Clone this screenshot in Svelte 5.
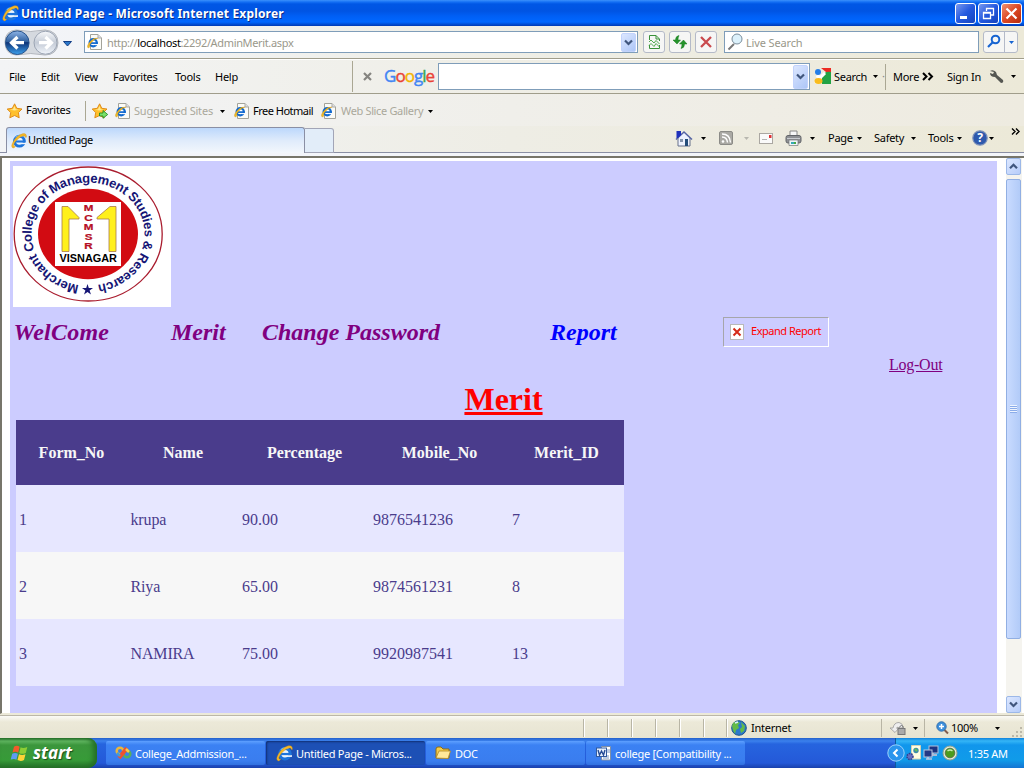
<script>
  const menus = ['File', 'Edit', 'View', 'Favorites', 'Tools', 'Help'];
  const rows = [
    ['1', 'krupa', '90.00', '9876541236', '7'],
    ['2', 'Riya', '65.00', '9874561231', '8'],
    ['3', 'NAMIRA', '75.00', '9920987541', '13']
  ];
  const columns = ['Form_No', 'Name', 'Percentage', 'Mobile_No', 'Merit_ID'];
</script>

{#snippet ie(s)}
  <svg width={s} height={s} viewBox="0 0 16 16">
    <circle cx="8.4" cy="8.2" r="4.9" fill="#eaf5ff" stroke="#1d74dc" stroke-width="2.9" />
    <path d="M10.2 9.6H15V11.2H10.2Z" fill="#f4f6fa" />
    <path d="M4.6 8.5H14.3" stroke="#1d74dc" stroke-width="2.1" />
    <path d="M4.6 4.4Q8 1.5 11.6 3.4" stroke="#6bbcff" stroke-width="1.2" fill="none" />
    <path d="M2.2 15Q-.8 14.1 2.2 8.7Q5.8 2.4 11.4.8Q15.8-.2 15.4 4.2L14.4 4.3Q14.2 1.7 9.6 4Q4.4 7.2 2.8 11.3Q2.1 13.8 4.6 13.3Q3.4 15 2.2 15Z" fill="#f5b928" stroke="#c88412" stroke-width=".35" />
  </svg>
{/snippet}

{#snippet page()}
  <svg width="16" height="16" viewBox="0 0 16 16">
    <path d="M3.5.5H11L14.5 4V15.5H3.5Z" fill="#fbfbf7" stroke="#a3a39a" />
    <path d="M11 .5V4H14.5" fill="#ddd" stroke="#aaa" />
    <circle cx="6.2" cy="8.8" r="3.6" fill="#fff" stroke="#1169cf" stroke-width="2.2" />
    <path d="M3 9.1H10.8" stroke="#1169cf" stroke-width="1.7" />
    <path d="M7.6 10.6H11" stroke="#fff" stroke-width="1.1" />
    <path d="M1.4 14Q-.8 12.6 2.6 8.2Q6.8 3.2 11 4.1Q7.4 4.8 4 8.8Q1.7 12.1 3 12.7Z" fill="#f4bd23" stroke="#c48a10" stroke-width=".4" />
  </svg>
{/snippet}

{#snippet arrow(color)}
  <svg class="arrow" width="5" height="3" viewBox="0 0 5 3"><path d="M0 0H5L2.5 3Z" fill={color} /></svg>
{/snippet}

{#snippet chevron(up)}
  <svg width="9" height="7" viewBox="0 0 9 7"><path d={up ? 'M1 5.3L4.5 1.8L8 5.3' : 'M1 1.5L4.5 5L8 1.5'} fill="none" stroke="#40567d" stroke-width="2.2" /></svg>
{/snippet}

{#snippet star(plus)}
  <svg width="16" height="16" viewBox="0 0 16 16">
    <path d="M7.6.8L9.8 5.3L15 6L11.4 9.6L12.2 14.8L7.6 12.5L2.8 14.8L3.7 9.6L.2 6L5.3 5.3Z" fill="#ffc02c" stroke="#dd8411" stroke-width=".9" />
    <path d="M7.4 3L8.7 6.3L11.4 6.8L7.6 7.6L3 6.8L6 6.2Z" fill="#ffe995" />
    {#if plus}<path d="M7.5 10H11V7.5L15.7 11.5L11 15.3V13H7.5Z" fill="#79df69" stroke="#16841b" stroke-width=".8" />{/if}
  </svg>
{/snippet}

<div class="screen">
  <header class="titlebar">
    <span class="app-icon">{@render ie(17)}</span>
    <h1>Untitled Page - Microsoft Internet Explorer</h1>
    <div class="window-buttons">
      <button aria-label="Minimize"><svg width="19" height="19"><path d="M4 13.5H11" stroke="#fff" stroke-width="3" /></svg></button>
      <button aria-label="Restore"><svg width="19" height="19"><path d="M7.5 7V4.5H14.5V11H12M7 4.5H15M4.5 8.5H11.5V14.5H4.5ZM4 9H12" fill="none" stroke="#fff" stroke-width="1.3" /></svg></button>
      <button class="close" aria-label="Close"><svg width="19" height="19"><path d="M4.5 4.5L14.5 14.5M14.5 4.5L4.5 14.5" stroke="#fff" stroke-width="2.2" /></svg></button>
    </div>
  </header>

  <div class="addressbar">
    <svg width="80" height="31" viewBox="0 0 80 31">
      <defs>
        <linearGradient id="back" x2="0" y2="1"><stop stop-color="#8eb4e7" /><stop offset=".45" stop-color="#31619f" /><stop offset=".5" stop-color="#0d3378" /><stop offset="1" stop-color="#3da1ed" /></linearGradient>
        <linearGradient id="fwd" x2="0" y2="1"><stop stop-color="#f8f9fb" /><stop offset=".5" stop-color="#c4cbd6" /><stop offset="1" stop-color="#f1f5fb" /></linearGradient>
      </defs>
      <path d="M16 3Q31 6 45 3Q58 4 58 16Q57 28 45 28Q31 25 16 28Q5 27 5 15Q5 4 16 3Z" fill="#d5d9df" stroke="#b2b6bd" />
      <circle cx="17.3" cy="15.7" r="11.8" fill="url(#back)" stroke="#28538c" />
      <circle cx="45.5" cy="15.7" r="11.5" fill="url(#fwd)" stroke="#9ba4b3" />
      <path d="M24 15.7H12M17.5 10L11.5 15.7L17.5 21.5" fill="none" stroke="#fff" stroke-width="3.2" />
      <path d="M39 15.7H51M45.5 10L51.5 15.7L45.5 21.5" fill="none" stroke="#fff" stroke-width="3.2" />
      <path d="M63.5 14.5H71.5L67.5 19Z" fill="#2a78ca" stroke="#123e87" />
    </svg>
    <div class="field address">{@render page()}<span class="url">http://<b>localhost</b>:2292/AdminMerit.aspx</span><span class="drop">{@render chevron(false)}</span></div>
    <button class="tool" aria-label="Compatibility View"><svg width="16" height="16"><path d="M3.5 6V1.5H10L13.5 5V7M3.5 11V14.5H13.5V11M10 1.5V5H13" fill="none" stroke="#399139" /><path d="M3 8L5 6L8 9L10 6.5L13.5 10M3 11.5L5 9.5L8 12.5L10 9.5L13.5 13" fill="none" stroke="#4fa94f" /></svg></button>
    <button class="tool" aria-label="Refresh"><svg width="16" height="16"><path d="M7 1.5Q3.5 2 3.5 6H1L5 10L8.5 6H6Q6 3.5 7 1.5ZM9 14.5Q12.5 14 12.5 10H15L11.5 6L7.5 10H10Q10 12.5 9 14.5Z" fill="#26942c" stroke="#147a1b" stroke-width=".5" /></svg></button>
    <button class="tool" aria-label="Stop"><svg width="16" height="16"><path d="M3 3L13 13M13 3L3 13" stroke="#c94a4e" stroke-width="2.3" /></svg></button>
    <div class="field search"><svg width="18" height="18" viewBox="0 0 18 18"><path d="M7 11L1.5 16.5" stroke="#777" stroke-width="2" /><circle cx="10" cy="6" r="5" fill="#dcf1fb" stroke="#7a8d9b" /></svg><span>Live Search</span></div>
    <div class="go"><span><svg width="16" height="16"><circle cx="9.5" cy="5.5" r="3.8" fill="none" stroke="#1764d1" stroke-width="2" /><path d="M6.5 8.5L2 13" stroke="#1764d1" stroke-width="2.2" /></svg></span><span>{@render arrow('#1764d1')}</span></div>
  </div>

  <div class="menubar">
    <nav class="menus">{#each menus as item}<span>{item}</span>{/each}</nav>
    <span class="toolbar-close"><svg width="9" height="9"><path d="M1 1L8 8M8 1L1 8" stroke="#858480" stroke-width="2.2" /></svg></span>
    <span class="google"><i>G</i><i>o</i><i>o</i><i>g</i><i>l</i><i>e</i></span>
    <div class="field gfield"><span class="drop">{@render chevron(false)}</span></div>
    <svg class="gicon" width="18" height="17"><path d="M7 0H17V9L12 4Z" fill="#ec2b22" /><path d="M8 9Q10 3 17 4V16H8Z" fill="#22a344" /><path d="M1 15L11 5" stroke="#fff" stroke-width="3" /><circle cx="4" cy="4" r="3" fill="#257fe8" /><ellipse cx="4.5" cy="13" rx="4" ry="3" fill="#f9bc1d" /><ellipse cx="4.5" cy="8.5" rx="2.5" ry="1.5" fill="#fff" /></svg>
    <span>Search</span>{@render arrow('#000')}
    <span class="grip">·</span>
    <span class="more">More</span>
    <svg width="13" height="10"><path d="M1 1L4.5 4.5L1 8M6.5 1L10 4.5L6.5 8" fill="none" stroke="#000" stroke-width="2" /></svg>
    <span>Sign In</span>
    <svg width="16" height="16"><path d="M1 2Q4 0 7 3L8 6L14 11Q15 14 12 14L6 8Q1 8 1 4L4 5L5 3Z" fill="#555752" /></svg>
    {@render arrow('#000')}
  </div>

  <div class="favorites">
    {@render star(false)}<span class="favtext">Favorites</span>
    <i class="sep"></i>
    {@render star(true)}
    {@render page()}<span class="dim">Suggested Sites</span>{@render arrow('#000')}
    {@render page()}<span class="hot">Free Hotmail</span>
    {@render page()}<span class="dim slice">Web Slice Gallery</span>{@render arrow('#000')}
  </div>

  <div class="tabs">
    <div class="tab">{@render ie(16)}<span>Untitled Page</span></div>
    <div class="newtab"></div>
    <div class="commands">
      <svg width="18" height="18"><path d="M3 8V16H15V8L9 2Z" fill="#eef2ff" stroke="#67708a" /><path d="M1 9.5L9 2L17 9.5" fill="none" stroke="#5664a4" stroke-width="1.5" /><path d="M1.5 1H6V5L3 8H1.5Z" fill="#1f31bc" /><path d="M10 9H13V16H10Z" fill="#234c79" /><path d="M5 9H8V12H5Z" fill="#8494ad" /></svg>
      {@render arrow('#000')}
      <svg width="15" height="15"><rect x=".5" y=".5" width="13" height="13" rx="1.5" fill="#aaa9a4" stroke="#8b8b87" /><circle cx="4" cy="10.5" r="1.3" fill="#fff" /><path d="M3 6Q8 6 8.5 11.5M3 3Q11 3 11.5 11.5" fill="none" stroke="#fff" stroke-width="1.4" /></svg>
      {@render arrow('#b8b7af')}
      <svg width="15" height="12"><rect x=".5" y=".5" width="13" height="10" fill="#fafafa" stroke="#aaa7a2" /><path d="M3 6.5H8" stroke="#b4b4b4" /><rect x="10" y="2" width="2.5" height="3" fill="#df3034" /></svg>
      <svg width="18" height="17"><path d="M5 6V1H12V6" fill="#f7f7f7" stroke="#888" /><rect x="1" y="5.5" width="15" height="7.5" rx="2" fill="#8e9094" stroke="#626468" /><path d="M2 8.5H15" stroke="#c9ccd0" /><path d="M4 10H13V15.5H4Z" fill="#eef5f8" stroke="#777" stroke-width=".7" /><path d="M6 13H9" stroke="#35aab4" stroke-width="2" /><path d="M9 13H11" stroke="#48a746" stroke-width="2" /></svg>
      {@render arrow('#000')}
      <span>Page</span>{@render arrow('#000')}
      <span>Safety</span>{@render arrow('#000')}
      <span>Tools</span>{@render arrow('#000')}
      <svg width="17" height="17"><circle cx="8" cy="8" r="7.2" fill="#2e59ad" stroke="#7d91b9" stroke-width="1.2" /><text x="8" y="12.3" text-anchor="middle" font-size="12" font-weight="bold" fill="#fff">?</text></svg>
      {@render arrow('#000')}
      <svg class="overflow" width="10" height="7"><path d="M1 .5L4 3.5L1 6.5M5 .5L8 3.5L5 6.5" fill="none" stroke="#000" stroke-width="1.4" /></svg>
    </div>
  </div>

  <main class="viewport">
    <section class="document">
      <svg class="logo" width="158" height="141" viewBox="0 0 158 141">
        <rect width="158" height="141" fill="#fff" />
        <ellipse cx="75.2" cy="68" rx="74" ry="67" fill="#fff" stroke="#a91c2e" stroke-width="1.3" />
        <ellipse cx="75" cy="68" rx="50" ry="45.3" fill="#d20b12" />
        <rect x="42" y="36" width="66" height="64" fill="#fff" />
        <path d="M49 40.5H55L66 51.5L66 53L56 53V85.5H49Z" fill="#fff01c" stroke="#a87b4b" stroke-width=".8" />
        <path d="M103 40.5H97L84 51.5L84 53L96 53V85.5H103Z" fill="#fff01c" stroke="#a87b4b" stroke-width=".8" />
        <g fill="#b50d24" stroke="#b50d24" stroke-width=".2" font-size="8.3" font-weight="bold" text-anchor="middle">
          {#each ['M', 'C', 'M', 'S', 'R'] as letter, i}<text transform="translate(75.5 {45 + i * 9.6}) scale(1.4 1)">{letter}</text>{/each}
        </g>
        <text x="46.5" y="96.3" font-size="10.5" font-weight="bold" textLength="57.5" lengthAdjust="spacingAndGlyphs">VISNAGAR</text>
        <path id="ring" d="M66 119A56.5 51.5 0 1 1 84 119" fill="none" />
        <text font-size="13" font-weight="bold" fill="#151575" textLength="320"><textPath href="#ring">Merchant College of Management Studies &amp; Research</textPath></text>
        <path d="M74.5 118L75.8 122H80L76.6 124.4L78 128.5L74.5 126L71 128.5L72.4 124.4L69 122H73.2Z" fill="#151575" />
      </svg>
      <nav class="site-nav">
        <a href="#welcome" class="welcome">WelCome</a><a href="#merit">Merit</a><a href="#password">Change Password</a><a class="report" href="#report">Report</a>
        <button class="expand"><svg width="14" height="16"><rect x=".5" y=".5" width="13" height="15" fill="#fff" stroke="#b9b9b9" /><path d="M3.5 4.5L10.5 11.5M10.5 4.5L3.5 11.5" stroke="#d52a18" stroke-width="2" /></svg><span>Expand Report</span></button>
      </nav>
      <div class="logout"><a href="#logout">Log-Out</a></div>
      <h2>Merit</h2>
      <table>
        <thead><tr>{#each columns as column}<th>{column}</th>{/each}</tr></thead>
        <tbody>{#each rows as row}<tr>{#each row as cell}<td>{cell}</td>{/each}</tr>{/each}</tbody>
      </table>
    </section>
    <aside class="scrollbar">
      <span class="scroll-button">{@render chevron(true)}</span>
      <span class="thumb"><i></i></span>
      <span class="scroll-button bottom">{@render chevron(false)}</span>
    </aside>
  </main>

  <footer class="status">
    <i></i><i></i><i></i><i></i><i></i><i></i><i></i>
    <div class="zone"><svg width="16" height="16"><circle cx="8" cy="8" r="7.3" fill="#2d79cb" stroke="#1c538b" /><path d="M2 3Q6 0 9 3L7 5L8 8L5 10L4 14L2 10L1 6ZM10 2L14 6L13 11L10 13L9 9L11 7Z" fill="#63bb48" /><path d="M4 3L7 2" stroke="#d8f2ff" stroke-width="1.5" /></svg><span>Internet</span></div>
    <div class="lock"><svg width="17" height="16"><path d="M0 8H3Q4 2.5 9 2.5Q12.5 3 13 7L9.5 9Q8 5.5 6.5 8H9L5 12.5Z" fill="#eee" stroke="#999" stroke-width=".8" /><rect x="8" y="8.5" width="7" height="6" fill="#aaa" stroke="#777" /><path d="M9.8 8V6.5Q11.5 4.5 13.2 6.5V8" fill="none" stroke="#777" /></svg>{@render arrow('#000')}</div>
    <div class="zoom"><svg width="14" height="14"><path d="M7.5 8L12 12.5" stroke="#855d4d" stroke-width="2" /><circle cx="5.5" cy="5.5" r="4.7" fill="#3c8fdc" stroke="#3470ad" /><path d="M5.5 3V8M3 5.5H8" stroke="#fff" stroke-width="1.5" /></svg><span>100%</span>{@render arrow('#000')}</div>
    <svg class="size-grip" width="12" height="12"><path d="M9 1H11V3H9ZM5 5H7V7H5ZM9 5H11V7H9ZM1 9H3V11H1ZM5 9H7V11H5ZM9 9H11V11H9Z" fill="#bcb8a8" /></svg>
  </footer>

  <div class="taskbar">
    <button class="start">
      <svg width="19" height="19" viewBox="0 0 19 19"><path d="M4 2.7Q7 .8 9.6 2.8L8.2 8.7Q5.5 7 2.5 8.6Z" fill="#f35a2b" /><path d="M10.6 3.2Q13 4.8 17.3 3L15.8 9Q12 10.7 9.2 9Z" fill="#8dcd35" /><path d="M2.2 9.8Q5 8 7.9 9.8L6.4 15.7Q4 14.2.7 15.6Z" fill="#5d9cf2" /><path d="M9 10.2Q12 11.8 15.5 10.2L14 16Q10.8 17.7 7.5 16.1Z" fill="#ffd337" /></svg>
      <span>start</span>
    </button>
    <button class="task t1"><svg width="17" height="15"><circle cx="5" cy="5" r="3.3" fill="none" stroke="#eab63c" stroke-width="2.5" /><circle cx="12" cy="8" r="3.3" fill="none" stroke="#58af5d" stroke-width="2.5" /><path d="M4 12L12 2" stroke="#ef522e" stroke-width="4" /><path d="M2 7L5 10" stroke="#439bd8" stroke-width="2.5" /><path d="M11 3L14 6" stroke="#f9ca48" stroke-width="2.5" /></svg><span>College_Addmission_...</span></button>
    <button class="task active t2">{@render ie(17)}<span>Untitled Page - Micros...</span></button>
    <button class="task t3"><svg width="16" height="14"><path d="M1 3Q1 1 3 1H6L8 3H14V12H1Z" fill="#f4cc4b" stroke="#8f6c12" /><path d="M1 12L4 5H15.5L13 12.5Z" fill="#ffe89a" stroke="#b38822" stroke-width=".8" /></svg><span>DOC</span></button>
    <button class="task t4"><svg width="16" height="16"><path d="M5.5 1.5H14.5V15H5.5Z" fill="#fff" stroke="#8090a7" /><path d="M10 5H14M10 7H14M7 11H13M7 13H13" stroke="#7b9ac7" /><rect x=".5" y="3" width="10" height="8.5" fill="#e9f2ff" stroke="#315a9f" /><path d="M2 5L3.5 10L5.5 6L7.5 10L9 5" fill="none" stroke="#254c96" stroke-width="1.4" /></svg><span>college [Compatibility ...</span></button>
    <div class="tray">
      <svg class="expander" width="18" height="18"><circle cx="9" cy="9" r="8.2" fill="#2a94ed" stroke="#9bd2fb" /><path d="M10.5 5.5L7 9L10.5 12.5" fill="none" stroke="#fff" stroke-width="2" /></svg>
      <svg width="16" height="16"><path d="M5.5.5H14.5V14H5.5Z" fill="#fffde1" stroke="#d4d1b3" /><circle cx="10" cy="5.5" r="2.7" fill="#3b8caa" /><path d="M9 4L11 6" stroke="#6bc253" stroke-width="2" /><circle cx="4" cy="11.5" r="3" fill="#6670be" stroke="#303d91" stroke-width="1.5" stroke-dasharray="1.5 1" /></svg>
      <svg width="16" height="16"><rect x="6" y="1" width="9" height="7" fill="#1c3480" stroke="#b3c1da" /><path d="M10 8V10H14" stroke="#a9bbd6" stroke-width="2" fill="none" /><rect x="1" y="5" width="8" height="7" fill="#233885" stroke="#bac8df" /><path d="M3 14H9M5 12V14" stroke="#bac8df" stroke-width="1.5" /></svg>
      <svg width="17" height="17"><circle cx="8" cy="8" r="7" fill="#e5eadc" stroke="#96a68a" /><circle cx="8" cy="8" r="4.8" fill="#4b9c1d" stroke="#597944" /><path d="M5.5 6Q8 4 10.5 6" stroke="#c9ecae" fill="none" stroke-width="1.4" /></svg>
      <time>1:35 AM</time>
    </div>
  </div>
</div>

<style>
  :global(body) { margin: 0; overflow: hidden; }
  * { box-sizing: border-box; }
  svg { display: block; flex: none; }
  button { border: 0; padding: 0; font: inherit; letter-spacing: inherit; }
  .screen { width: 1024px; height: 768px; display: flex; flex-direction: column; overflow: hidden; color: #000; background: #ece9d8; font: 11px/14px "Noto Sans", sans-serif; letter-spacing: -.27px; white-space: nowrap; }
  .screen > * { flex: none; }
  .titlebar { height: 26px; display: flex; align-items: center; padding: 0 2px; background: linear-gradient(#3b91fb 0, #1470f4 2px, #0057e5 4px, #0054e3 11px, #005ff5 16px, #0067ff 22px, #0050d9 24px, #0039b4 26px); color: #fff; }
  .app-icon { width: 19px; }
  h1 { flex: 1; margin: 1px 0 0; font: bold 12px/18px "Noto Sans", sans-serif; letter-spacing: .17px; text-shadow: 1px 1px #0a2c87; }
  .window-buttons { display: flex; gap: 2px; }
  .window-buttons button { width: 21px; height: 21px; display: grid; place-items: center; border: 1px solid #fff; border-radius: 3px; background: linear-gradient(135deg, #7898ef, #2459df 50%, #1544bd); }
  .window-buttons .close { background: linear-gradient(135deg, #ef9272, #dd4823 50%, #b52b0b); }
  .addressbar { height: 33px; display: grid; grid-template-columns: 80px 554px 22px 22px 22px 255px 35px; column-gap: 4px; align-items: center; background: linear-gradient(90deg, #f3f5fa, #efefe9 40%, #ece9d8); border-bottom: 1px solid #a09d8b; }
  .field { height: 22px; background: #fff; border: 1px solid #7f9db9; display: flex; align-items: center; }
  .address { padding: 0 1px 0 2px; color: #9a988b; }
  .url { flex: 1; margin: 2px 0 0 4px; letter-spacing: -.35px; }
  .url b { color: #000; font-weight: 400; }
  .drop { width: 15px; height: 19px; margin-left: auto; display: grid; place-items: center; border-radius: 2px; background: linear-gradient(135deg, #dce7ff, #adc6f7); border: 1px solid #c2d3fc; }
  .tool, .go { height: 22px; width: 22px; display: grid; place-items: center; border: 1px solid #b4bac8; border-radius: 3px; background: #f6f6f5; }
  .tool { margin-left: 1px; }
  .search { margin-left: 4px; width: 255px; padding-left: 2px; color: #999789; }
  .search span { margin: 2px 0 0 1px; letter-spacing: -.15px; }
  .go { width: 35px; margin-left: 4px; grid-template-columns: 20px 13px; }
  .go span { height: 20px; width: 100%; display: grid; place-items: center; }
  .go span + span { border-left: 1px solid #b4bac8; }
  .menubar { height: 35px; display: grid; grid-template-columns: 352px 32px 54px 372px 23px 40px 9px 9px 28px 26px 42px 21px 6px; align-items: center; background: linear-gradient(90deg, #f3f4f5, #efeee6 50%, #ece9d8); border-top: 1px solid #fff; border-bottom: 1px solid #a09d8b; }
  .menus { display: grid; grid-template-columns: 32px 34px 38px 62px 40px auto; padding-left: 9px; }
  .toolbar-close { height: 31px; display: flex; align-items: center; border-left: 1px solid #aaa793; padding-left: 10px; }
  .google { font: 17px/22px "Open Sans", sans-serif; letter-spacing: -.95px; padding-bottom: 2px; color: #4285f4; -webkit-text-stroke: .4px currentColor; }
  .google i { font-style: normal; }
  .google i:nth-child(2), .google i:nth-child(6) { color: #ea4335; }
  .google i:nth-child(3) { color: #f4b400; }
  .google i:nth-child(5) { color: #34a853; }
  .gfield { height: 27px; width: 372px; padding-right: 1px; }
  .gfield .drop { height: 24px; }
  .gicon { margin-left: 4px; }
  .gicon + span { letter-spacing: -.3px; padding-left: 1px; }
  .grip { height: 26px; line-height: 24px; border-right: 1px solid #aaa793; color: #888; width: 4px; }
  .more { padding-left: 2px; }
  .menubar .more + svg { margin-left: 3px; }
  .menubar .more + svg + span { padding-left: 2px; }
  .menubar .more + svg + span + svg { margin-left: 2px; }
  .menubar > svg:last-child { margin-left: 3px; }
  .favorites { height: 32px; display: grid; grid-template-columns: 19px 59px 7px 23px 18px 87px 14px 19px 68px 19px 88px 5px; padding: 2px 0 0 7px; align-items: center; background: linear-gradient(90deg, #f3f4f6, #f0efea 50%, #eeebe0); }
  .favtext { margin-top: -2px; }
  .sep { height: 20px; border-left: 1px solid #aaa793; }
  .dim { color: #aaa89b; padding-left: 1px; letter-spacing: -.2px; }
  .hot { letter-spacing: -.5px; }
  .slice { letter-spacing: -.35px; }
  .tabs { height: 31px; display: flex; align-items: flex-end; padding-left: 6px; background: linear-gradient(90deg, #f3f4f6, #eeede5 50%, #ece9d8); border-bottom: 4px solid #f3f5fa; box-shadow: inset 0 -1px #8a8fa4; }
  .tab { width: 299px; height: 26px; display: flex; align-items: center; gap: 1px; padding-left: 4px; border: 1px solid #8a8fa4; border-bottom: 0; border-radius: 3px 3px 0 0; background: linear-gradient(#bcd8fc, #dfebfb 50%, #f3f7fc); }
  .tab span { margin-top: -1px; letter-spacing: -.4px; }
  .newtab { width: 29px; height: 25px; border: 1px solid #a2a5b7; border-left: 0; border-radius: 0 3px 0 0; background: #e2edf9; }
  .commands { margin-left: 341px; height: 29px; display: grid; grid-template-columns: 26px 18px 25px 15px 26px 25px 18px 29px 17px 37px 17px 29px 15px 17px 22px 12px; align-items: center; }
  .commands span { margin-top: -1px; }
  .commands .overflow { margin-bottom: 15px; }
  .viewport { height: 558px; display: flex; background: #fff; border-top: 2px solid #77756a; border-left: 2px solid #77756a; border-bottom: 1px solid #ece9d8; margin-top: -1px; margin-bottom: 1px; }
  .document { width: 987px; height: 552px; margin: 3px 9px 0 8px; padding: 5px 3px 0; background: #ccf; display: flex; flex-direction: column; font: 16px/18px "Liberation Serif", serif; letter-spacing: 0; }
  .logo { font-family: "Liberation Sans", sans-serif; }
  .site-nav { display: grid; grid-template-columns: 158px 91px 288px 173px 106px; height: 50px; align-items: center; }
  .site-nav a { color: #800080; text-decoration: none; font: italic bold 24px/28px "Liberation Serif", serif; }
  .site-nav .welcome { letter-spacing: .2px; padding-left: .5px; }
  .site-nav .report { color: #00f; }
  .expand { width: 106px; height: 30px; display: flex; align-items: center; padding-left: 6px; background: #ccf; border: 1px solid #a6a6aa; border-right-color: #fff; border-bottom-color: #fff; color: red; font: 11px/14px "Noto Sans", sans-serif; gap: 7px; letter-spacing: -.48px; }
  .expand span { margin-top: -2px; }
  .logout { padding-left: 876px; height: 24px; line-height: 15px; letter-spacing: -.25px; }
  .logout a { color: #800080; }
  h2 { width: 981px; margin: 0; height: 39px; text-align: center; font: bold 32px/36px "Liberation Serif", serif; color: red; text-decoration: underline; }
  table { width: 608px; margin-left: 3px; border-collapse: collapse; table-layout: fixed; color: #4a3c8c; }
  th { height: 65px; padding: 0; background: #4a3c8c; color: #f7f7f7; }
  th:nth-child(1) { width: 111px; }
  th:nth-child(2) { width: 112px; }
  th:nth-child(3) { width: 131px; }
  th:nth-child(4) { width: 139px; }
  td { height: 67px; padding: 2px 0 0 3px; background: #e7e7ff; }
  td:nth-child(2) { padding-left: 3.5px; letter-spacing: -.15px; }
  tr:nth-child(2) td { background: #f7f7f7; }
  .scrollbar { width: 16px; height: 555px; display: flex; flex-direction: column; background: #f5f4ef; }
  .scroll-button { height: 17px; width: 15px; display: grid; place-items: center; border: 1px solid #9cb8e8; border-radius: 2px; background: linear-gradient(135deg, #dce7ff, #b7cdfa); }
  .thumb { width: 15px; height: 460px; margin-top: 4px; display: grid; place-items: center; border: 1px solid #91afe3; border-radius: 2px; background: linear-gradient(90deg, #c9dbff, #b2cbf8); }
  .thumb i { width: 7px; height: 8px; background: repeating-linear-gradient(#eef4ff 0 1px, #8bace9 1px 2px); }
  .bottom { margin-top: auto; }
  .status { height: 23px; display: grid; grid-template-columns: 24px 24px 24px 24px 24px 23px 5px 150px 43px 87px 14px; padding: 2px 0 0 583px; align-items: center; border-top: 1px solid #bbb7a8; background: linear-gradient(#fbfaf6, #ece9d8 6px, #e7e4d2); }
  .status i { height: 18px; border-left: 1px solid #b8b5a5; box-shadow: inset 1px 0 #fff; }
  .status div { display: flex; align-items: center; height: 18px; }
  .zone { gap: 4px; }
  .zone span { letter-spacing: -.25px; }
  .lock, .zoom { border-left: 1px solid #b8b5a5; }
  .lock { padding-left: 8px; gap: 6px; }
  .zoom { padding-left: 11px; }
  .zoom span { width: 44px; margin-left: 1px; }
  .size-grip { align-self: end; }
  .taskbar { height: 30px; display: grid; grid-template-columns: 106px 160px 160px 160px 309px 129px; align-items: center; background: linear-gradient(#2360cb 0, #3b81ed 3px, #2664df 6px, #2459d8 25px, #1a41ac 30px); color: #fff; }
  .start { width: 97px; height: 30px; display: flex; align-items: center; gap: 4px; padding-left: 10px; color: #fff; background: linear-gradient(#276f2e 0, #63b963 3px, #3b963c 7px, #379b38 22px, #236e27); border-radius: 0 9px 9px 0; box-shadow: inset -4px 0 5px #246f26; font: italic bold 17px/22px "Open Sans", sans-serif; letter-spacing: -.05px; text-shadow: 1px 1px 1px #194e1c; }
  .task { width: 159px; height: 24px; display: flex; align-items: center; padding-left: 9px; gap: 3px; color: #fff; background: linear-gradient(#5ea0ff, #3b81f3 4px, #3a7def 20px, #3171df); border-radius: 2px; letter-spacing: -.27px; }
  .task span { margin-top: 1px; }
  .t2 { padding-left: 10px; gap: 3px; }
  .t3 { gap: 4px; }
  .t4 { padding-left: 10px; }
  .active { background: #1d50b5; box-shadow: inset 1px 1px 2px #112f72; }
  .tray { height: 30px; display: grid; grid-template-columns: 10px 17px 19px 26px auto; align-items: center; background: linear-gradient(#1182dc, #34b5f6 3px, #1196ec 7px, #109be9 22px, #1474d2); border-left: 1px solid #0c5a9e; }
  .expander { margin-left: -9px; }
  .tray time { margin-top: 1px; }
</style>
